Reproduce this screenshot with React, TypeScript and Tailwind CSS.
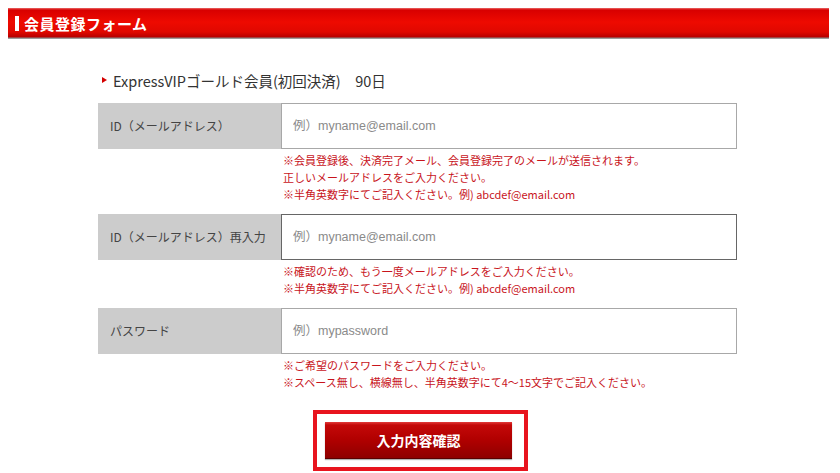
import React from 'react';

const jp = "font-['Noto_Sans_CJK_JP',sans-serif]";

interface Field {
  label: string;
  placeholder: string;
  type: string;
  notes: string[];
  active?: boolean;
}

const fields: Field[] = [
  {
    label: 'ID（メールアドレス）',
    placeholder: '例）myname@email.com',
    type: 'text',
    notes: [
      '※会員登録後、決済完了メール、会員登録完了のメールが送信されます。',
      '正しいメールアドレスをご入力ください。',
      '※半角英数字にてご記入ください。例) abcdef@email.com',
    ],
  },
  {
    label: 'ID（メールアドレス）再入力',
    placeholder: '例）myname@email.com',
    type: 'text',
    active: true,
    notes: [
      '※確認のため、もう一度メールアドレスをご入力ください。',
      '※半角英数字にてご記入ください。例) abcdef@email.com',
    ],
  },
  {
    label: 'パスワード',
    placeholder: '例）mypassword',
    type: 'password',
    notes: [
      '※ご希望のパスワードをご入力ください。',
      '※スペース無し、横線無し、半角英数字にて4〜15文字でご記入ください。',
    ],
  },
];

export default function App() {
  return (
    <div className={`w-[840px] h-[473px] overflow-hidden bg-white ${jp}`}>
      {/* 見出し */}
      <div className="pt-2 pl-2 w-[829px]">
        <div className="h-[31px] flex items-center pl-[7px] bg-[linear-gradient(to_bottom,#e86a6a_0px,#d80000_2px,#ee0a00_14px,#e00800_24px,#b80000_29px,#8a8a8a_30px,#b0b0b0_31px)]">
          <span className="w-[4px] h-[15px] bg-white mr-[5px]" />
          <h1 className="text-white font-bold text-[15px] leading-none tracking-[0.5px]">会員登録フォーム</h1>
        </div>
      </div>

      {/* コース名 */}
      <div className="ml-[102px] mt-[33px] flex items-center h-[18px]">
        <span className="w-0 h-0 border-y-[3.5px] border-y-transparent border-l-[5px] border-l-[#d40000] mr-[6px] -mt-[3px]" />
        <p className="text-[14.5px] text-[#333] leading-none">ExpressVIPゴールド会員(初回決済)　90日</p>
      </div>

      {/* フォーム */}
      <form className="ml-[98px] w-[639px] mt-[13px]">
        {fields.map((f) => (
          <div key={f.label}>
            <div className="flex h-[46px]">
              <label className="w-[183px] bg-[#cccccc] flex items-center pl-[12px] text-[12px] text-[#444]">
                {f.label}
              </label>
              <input
                type="text"
                placeholder={f.placeholder}
                className={`flex-1 border bg-white pl-[11px] text-[12.5px] outline-none placeholder:text-[#8a8a8a] font-['Liberation_Sans','Noto_Sans_CJK_JP',sans-serif] ${
                  f.active ? 'border-[#666]' : 'border-[#a8a8a8]'
                }`}
              />
            </div>
            <div className="pl-[185px] pt-[3px] pb-[11px] text-[11px] leading-[17px] text-[#c8141c]">
              {f.notes.map((n) => (
                <p key={n}>{n}</p>
              ))}
            </div>
          </div>
        ))}
      </form>

      {/* 確認ボタン */}
      <div className="flex justify-center pl-[1px]">
        <div className="mt-[8px] border-4 border-[#e8141e] pl-2 pr-3 py-2 bg-white">
          <button
            type="button"
            className={`w-[187px] h-[37px] text-white font-bold text-[14px] border-b border-[#5a0000] bg-[linear-gradient(to_bottom,#e23a3a_0px,#c40808_3px,#b00000_18px,#8e0000_36px)] shadow-[0_1px_1px_rgba(0,0,0,0.3)] ${jp}`}
          >
            入力内容確認
          </button>
        </div>
      </div>
    </div>
  );
}
